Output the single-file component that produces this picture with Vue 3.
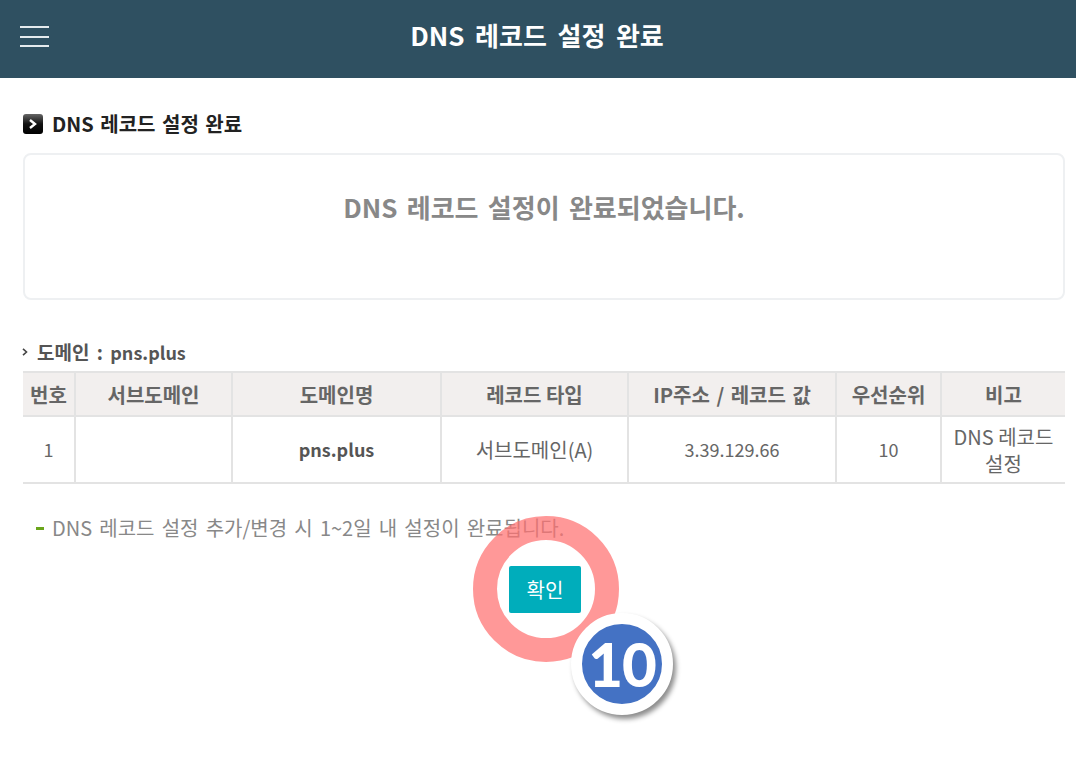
<script setup>
const headers = ['번호', '서브도메인', '도메인명', '레코드 타입', 'IP주소 / 레코드 값', '우선순위', '비고']
</script>

<template>
  <div class="page">
    <header class="topbar">
      <button class="burger" aria-label="메뉴"><i></i><i></i><i></i></button>
      <h1>DNS 레코드 설정 완료</h1>
    </header>
    <main class="content">
      <h2 class="title">
        <svg width="22" height="22" viewBox="0 0 22 22">
          <defs>
            <linearGradient id="g" x1="0" y1="0" x2="0" y2="1">
              <stop offset="0" stop-color="#666" />
              <stop offset="0.5" stop-color="#111" />
              <stop offset="1" stop-color="#000" />
            </linearGradient>
          </defs>
          <rect x="1" y="1" width="20" height="20" rx="3" fill="url(#g)" />
          <path d="M8 7l5 4-5 4" fill="none" stroke="#fff" stroke-width="2.4" />
        </svg>
        <span>DNS 레코드 설정 완료</span>
      </h2>
      <div class="box">DNS 레코드 설정이 완료되었습니다.</div>
      <h3 class="domain">
        <svg width="6" height="8" viewBox="0 0 6 8"><path d="M1 0.8L4.5 4 1 7.2" fill="none" stroke="#444" stroke-width="1.6" /></svg>
        <span>도메인 : <span class="latin">pns.plus</span></span>
      </h3>
      <table class="grid">
        <colgroup>
          <col style="width:52px" /><col style="width:157px" /><col style="width:209px" /><col style="width:187px" /><col style="width:208px" /><col style="width:105px" /><col />
        </colgroup>
        <thead>
          <tr><th v-for="h in headers" :key="h">{{ h }}</th></tr>
        </thead>
        <tbody>
          <tr>
            <td class="num">1</td>
            <td></td>
            <td class="strong">pns.plus</td>
            <td>서브도메인(A)</td>
            <td class="num">3.39.129.66</td>
            <td class="num">10</td>
            <td>DNS 레코드<br />설정</td>
          </tr>
        </tbody>
      </table>
      <p class="note"><span class="dash"></span>DNS 레코드 설정 추가/변경 시 1~2일 내 설정이 완료됩니다.</p>
      <div class="actions">
        <button class="ok">확인</button>
        <span class="ring"></span>
        <span class="badge">10</span>
      </div>
    </main>
  </div>
</template>

<style>
html, body { margin: 0; background: #fff; }
</style>

<style scoped>
.page {
  width: 1076px;
  height: 757px;
  overflow: hidden;
  font-family: "Noto Sans CJK KR", "Noto Sans", sans-serif;
  color: #666;
  background: #fff;
}
.topbar {
  height: 78px;
  background: #2f5061;
  display: flex;
  align-items: center;
  justify-content: center;
  position: relative;
}
.topbar h1 {
  margin: 0 2px 0 0;
  color: #fff;
  font-size: 26px;
  font-weight: 700;
  word-spacing: 4.7px;
  line-height: 30px;
  position: relative;
  top: -4px;
}
.burger {
  position: absolute;
  left: 20px;
  top: 26px;
  width: 29px;
  height: 21px;
  padding: 0;
  border: 0;
  background: none;
  display: flex;
  flex-direction: column;
  justify-content: space-between;
}
.burger i {
  display: block;
  height: 2px;
  background: #e4eaed;
}
.content {
  padding: 0 11px 0 23px;
}
.title {
  margin: 34px 0 0 -1px;
  height: 24px;
  display: flex;
  align-items: center;
  gap: 8px;
  font-size: 20px;
  word-spacing: 2px;
  line-height: 24px;
  font-weight: 700;
  color: #222;
}
.box {
  box-sizing: border-box;
  height: 147px;
  margin-top: 17px;
  padding-top: 34px;
  border: 2px solid #eef0f2;
  border-radius: 8px;
  text-align: center;
  font-size: 26px;
  word-spacing: 3.4px;
  line-height: 36px;
  font-weight: 700;
  color: #888;
}
.domain {
  margin: 39px 0 0 -1px;
  height: 26px;
  display: flex;
  align-items: center;
  gap: 9px;
  font-size: 19px;
  word-spacing: 3px;
  line-height: 26px;
  font-weight: 700;
  color: #555;
}
.latin {
  font-size: 18px;
}
.grid {
  width: 100%;
  margin-top: 6px;
  border-collapse: collapse;
  table-layout: fixed;
  font-size: 20px;
}
.grid th, .grid td {
  border: 2px solid #e3e3e3;
  text-align: center;
  padding: 0;
}
.grid tr > :first-child { border-left: 0; }
.grid tr > :last-child { border-right: 0; }
.grid th {
  height: 42px;
  background: #f2efee;
  color: #666;
  font-weight: 700;
}
.grid th:nth-child(5) { word-spacing: 2px; }
.grid td {
  height: 65px;
  font-size: 20px;
  line-height: 27px;
  font-weight: 400;
  color: #666;
}
.grid td.num { font-size: 18px; }
.grid td.strong { font-weight: 700; font-size: 18px; color: #555; }
.note {
  margin: 28px 0 0 13px;
  height: 32px;
  display: flex;
  align-items: center;
  font-size: 20px;
  word-spacing: 2.7px;
  line-height: 32px;
  color: #888;
  white-space: nowrap;
}
.dash {
  width: 8px;
  height: 3px;
  margin-right: 8px;
  background: #6aa51b;
}
.actions {
  position: relative;
  display: flex;
  justify-content: center;
  margin: 22px 0 0 0;
  width: 1044px;
}
.ok {
  width: 72px;
  height: 47px;
  padding: 0;
  border: 0;
  border-radius: 2px;
  background: #00adbb;
  color: #fff;
  font: 400 20px "Noto Sans CJK KR", sans-serif;
}
.ring {
  position: absolute;
  left: 450px;
  top: -50px;
  width: 98px;
  height: 98px;
  border: 24px solid rgba(255, 112, 112, 0.72);
  border-radius: 50%;
  pointer-events: none;
}
.badge {
  position: absolute;
  left: 548px;
  top: 47px;
  box-sizing: border-box;
  width: 102px;
  height: 102px;
  border: 11px solid #fff;
  border-radius: 50%;
  background: #4472c4;
  color: #fff;
  box-shadow: 3px 4px 5px rgba(0, 0, 0, 0.45);
  font: 900 60px/80px "Lato", sans-serif;
  letter-spacing: -1px;
  text-align: center;
}
</style>
